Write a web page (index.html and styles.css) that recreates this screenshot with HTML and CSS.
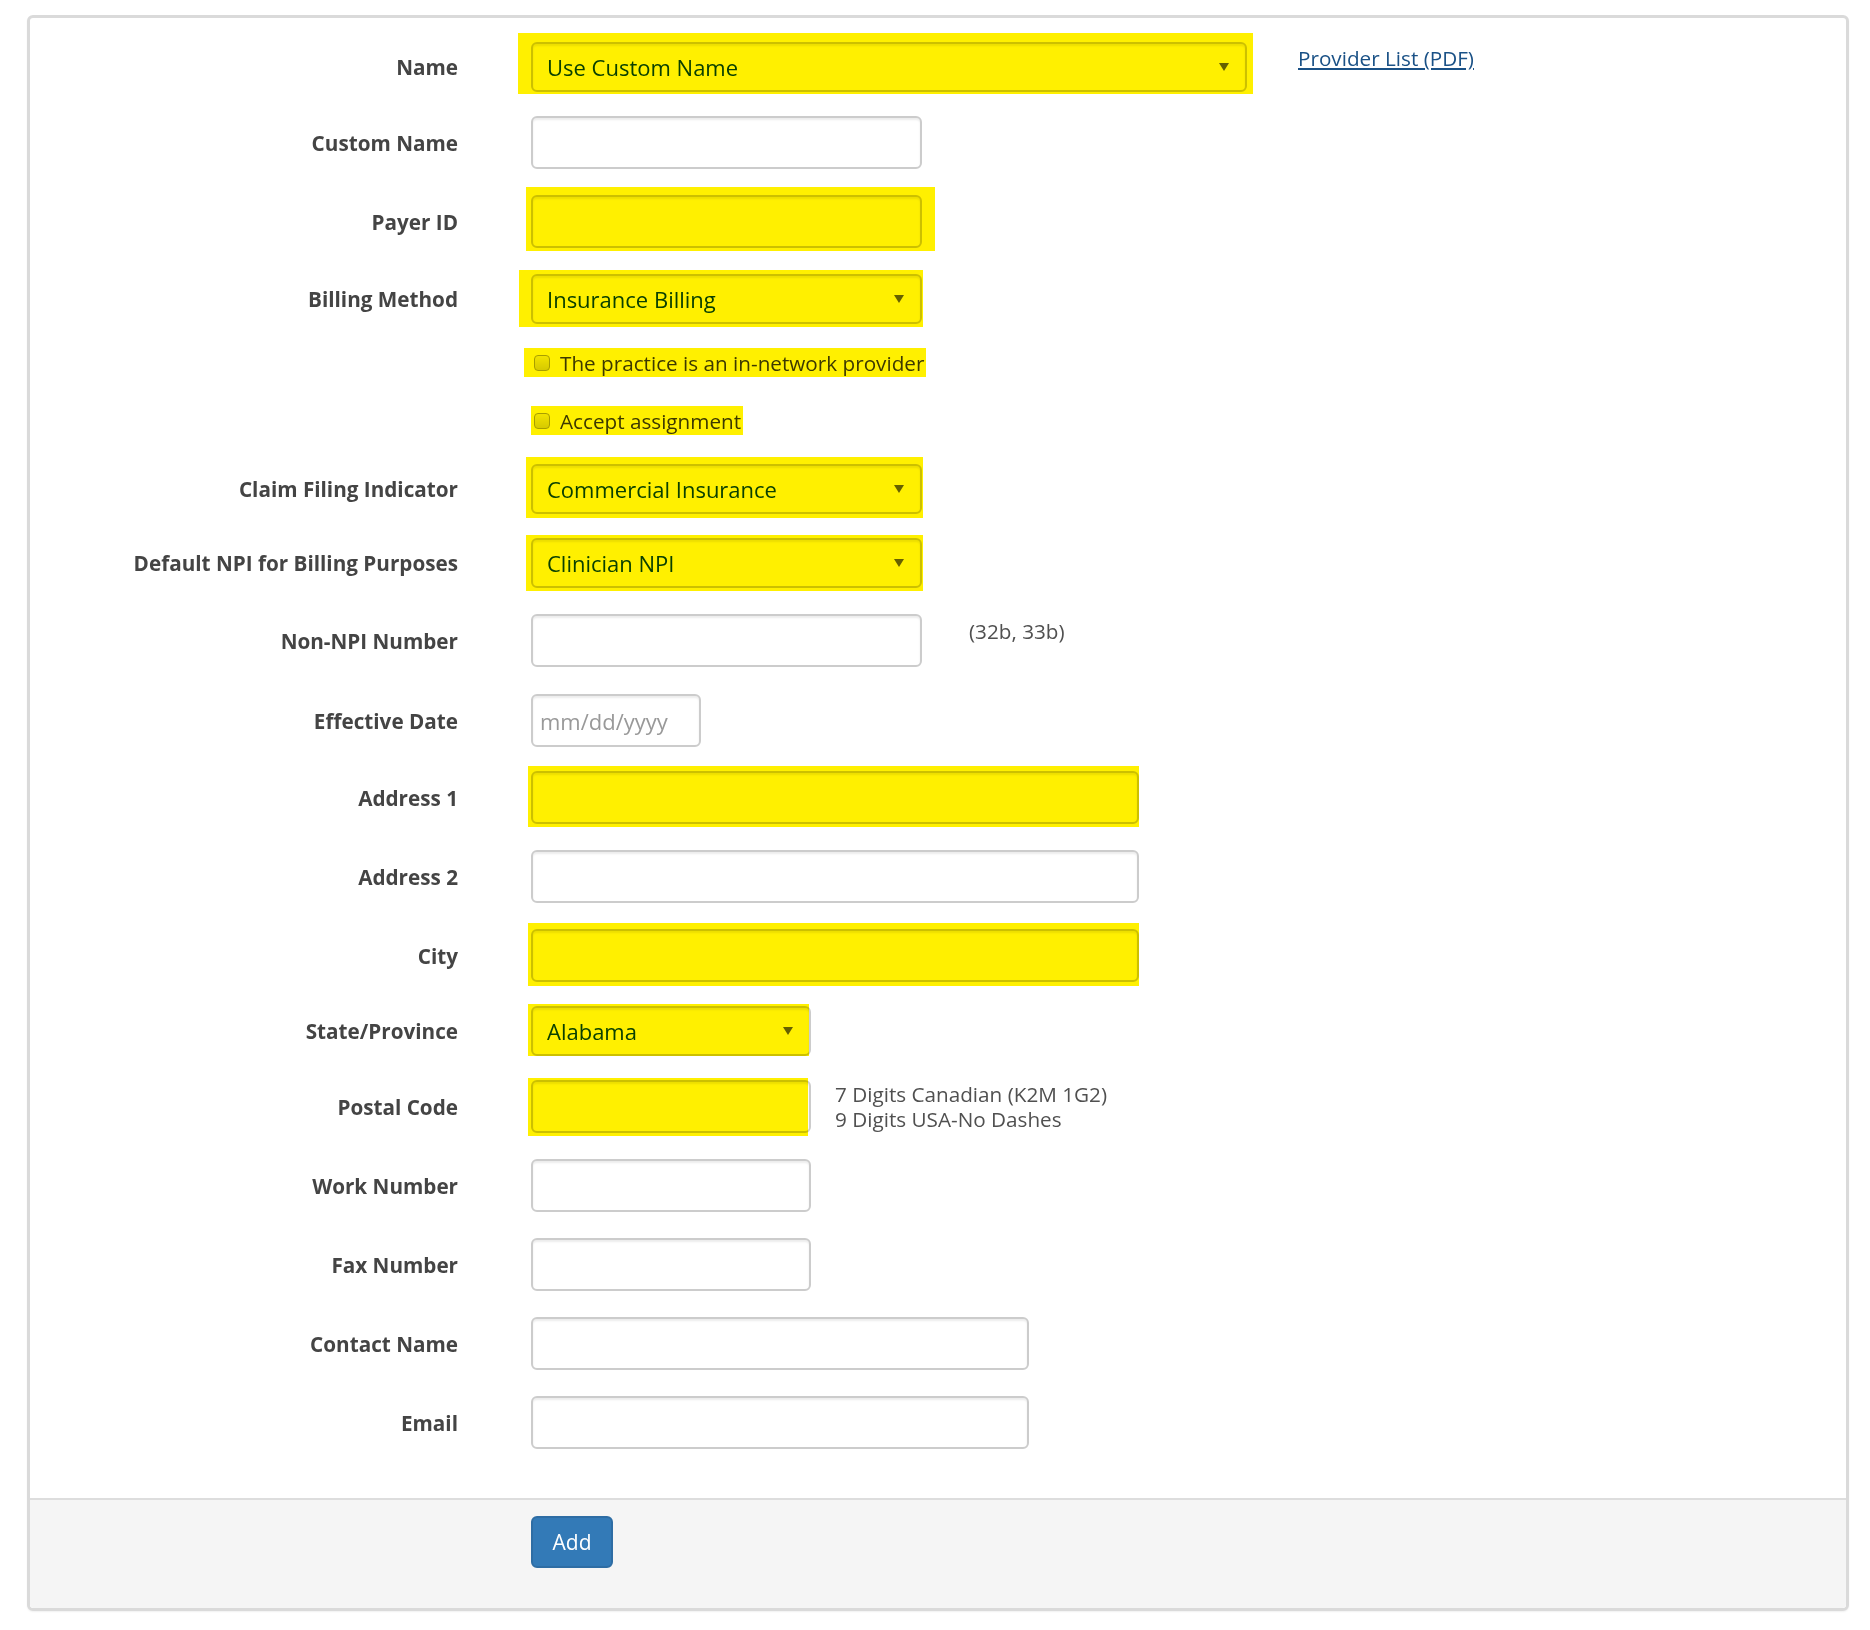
FILE: index.html
```html
<!DOCTYPE html>
<html lang="en">
<head>
    <meta charset="UTF-8">
    <meta name="viewport" content="width=device-width, initial-scale=1.0">
    <title>Add Insurance Payer</title>
    <link rel="stylesheet" href="styles.css">
</head>
<body>
    <div class="panel">
        <form class="panel-body">
            <div class="row row-select">
                <label class="label">Name</label>
                <div class="field">
                    <span class="hl hl-name"><select class="ctl sel w-xl"><option>Use Custom Name</option></select></span>
                    <a class="side-link" href="#">Provider List (PDF)</a>
                </div>
            </div>

            <div class="row">
                <label class="label">Custom Name</label>
                <div class="field"><input class="ctl w-md" type="text"></div>
            </div>

            <div class="row">
                <label class="label">Payer ID</label>
                <div class="field"><span class="hl hl-payer"><input class="ctl w-md" type="text"></span></div>
            </div>

            <div class="row row-select">
                <label class="label">Billing Method</label>
                <div class="field"><span class="hl hl-billing"><select class="ctl sel w-md"><option>Insurance Billing</option></select></span></div>
            </div>

            <div class="row row-check">
                <span></span>
                <div class="field">
                    <label class="check hl hl-cb1"><input class="cb" type="checkbox">The practice is an in-network provider</label>
                </div>
            </div>

            <div class="row row-check">
                <span></span>
                <div class="field">
                    <label class="check hl hl-cb2"><input class="cb" type="checkbox">Accept assignment</label>
                </div>
            </div>

            <div class="row row-select">
                <label class="label">Claim Filing Indicator</label>
                <div class="field"><span class="hl hl-claim"><select class="ctl sel w-md"><option>Commercial Insurance</option></select></span></div>
            </div>

            <div class="row row-select row-npi">
                <label class="label">Default NPI for Billing Purposes</label>
                <div class="field"><span class="hl hl-npi"><select class="ctl sel w-md"><option>Clinician NPI</option></select></span></div>
            </div>

            <div class="row row-nonnpi">
                <label class="label">Non-NPI Number</label>
                <div class="field">
                    <input class="ctl w-md" type="text">
                    <span class="note note-npi">(32b, 33b)</span>
                </div>
            </div>

            <div class="row row-date">
                <label class="label">Effective Date</label>
                <div class="field"><input class="ctl ctl-date w-xs" type="text" placeholder="mm/dd/yyyy"></div>
            </div>

            <div class="row">
                <label class="label">Address 1</label>
                <div class="field"><span class="hl hl-addr"><input class="ctl w-lg" type="text"></span></div>
            </div>

            <div class="row">
                <label class="label">Address 2</label>
                <div class="field"><input class="ctl w-lg" type="text"></div>
            </div>

            <div class="row row-city">
                <label class="label">City</label>
                <div class="field"><span class="hl hl-city"><input class="ctl w-lg" type="text"></span></div>
            </div>

            <div class="row row-select">
                <label class="label">State/Province</label>
                <div class="field"><span class="hl hl-state"><select class="ctl sel w-sm"><option>Alabama</option></select></span></div>
            </div>

            <div class="row">
                <label class="label">Postal Code</label>
                <div class="field">
                    <span class="hl hl-postal"><input class="ctl w-sm" type="text"></span>
                    <span class="note note-postal">7 Digits Canadian (K2M 1G2)<br>9 Digits USA-No Dashes</span>
                </div>
            </div>

            <div class="row">
                <label class="label">Work Number</label>
                <div class="field"><input class="ctl w-sm" type="text"></div>
            </div>

            <div class="row">
                <label class="label">Fax Number</label>
                <div class="field"><input class="ctl w-sm" type="text"></div>
            </div>

            <div class="row">
                <label class="label">Contact Name</label>
                <div class="field"><input class="ctl w-ml" type="text"></div>
            </div>

            <div class="row">
                <label class="label">Email</label>
                <div class="field"><input class="ctl w-ml" type="text"></div>
            </div>
        </form>

        <div class="panel-footer">
            <button class="btn-add" type="button">Add</button>
        </div>
    </div>
</body>
</html>
```

FILE: styles.css
```css
* {
    margin: 0;
    padding: 0;
    box-sizing: border-box;
}

body {
    background: #fff;
    font-family: "Open Sans", "Liberation Sans", Arial, sans-serif;
    color: #555;
}

/* panel */
.panel {
    margin: 15px 21px 20px 27px;
    border: 3px solid #dadada;
    border-radius: 6px;
    background: #fff;
    box-shadow: 0 1px 2px rgba(0,0,0,0.06);
}
.panel-body {
    padding: 24px 0 23px;
}
.panel-footer {
    border-top: 2px solid #ddd;
    background: #f5f5f5;
    padding: 16px 0 40px 501px;
    border-radius: 0 0 4px 4px;
}

/* rows */
.row {
    display: grid;
    grid-template-columns: 428px 1fr;
    column-gap: 73px;
    align-items: center;
    margin-bottom: 26px;
}
.row-select {
    margin-bottom: 24px;
}
.row-check {
    margin-bottom: 29px;
}
.row-npi {
    margin-bottom: 26px;
}
.row-nonnpi {
    margin-bottom: 27px;
}
.row-date,
.row-city {
    margin-bottom: 24px;
}
.label {
    text-align: right;
    font-weight: 700;
    font-size: 20.7px;
    color: #444;
}
.field {
    display: flex;
    align-items: flex-start;
}

/* controls */
.ctl {
    display: block;
    height: 53px;
    border: 2px solid #ccc;
    border-radius: 6px;
    background: #fff;
    box-shadow: inset 0 2px 2px rgba(0,0,0,0.075);
    font-family: inherit;
    font-size: 22px;
    color: #555;
    padding: 0 14px;
    outline: none;
}
.ctl-date {
    padding-left: 7px;
}
.ctl-date::placeholder {
    color: #999;
}
.sel {
    height: 50px;
    -webkit-appearance: none;
    appearance: none;
    color: #0a440c;
    background-image: url("data:image/svg+xml;charset=UTF-8,%3csvg xmlns='http://www.w3.org/2000/svg' viewBox='0 0 10 8'%3e%3cpolygon points='0,0 10,0 5,8' fill='%23666'/%3e%3c/svg%3e");
    background-repeat: no-repeat;
    background-position: right 16px center;
    background-size: 10px 8px;
}
.w-xl { width: 716px; }
.w-lg { width: 608px; }
.w-ml { width: 498px; }
.w-md { width: 391px; }
.w-sm { width: 280px; }
.w-xs { width: 170px; }

/* checkboxes */
.check {
    display: flex;
    align-items: center;
    height: 29px;
    padding-left: 3px;
    font-size: 20.7px;
    color: #3c3c3c;
}
.cb {
    -webkit-appearance: none;
    appearance: none;
    width: 16px;
    height: 16px;
    margin: 0 10px 0 0;
    border: 1px solid #a8a8a8;
    border-radius: 4px;
    background: linear-gradient(#f2f2f2, #d6d6d6);
}

/* side texts */
.side-link {
    margin: 2px 0 0 51px;
    font-size: 20.7px;
    line-height: 28px;
    color: #1a5186;
    text-decoration: underline;
}
.note {
    font-size: 20.7px;
    color: #505050;
}
.note-npi {
    margin: 3px 0 0 47px;
    line-height: 28px;
}
.note-postal {
    margin: 2px 0 0 24px;
    line-height: 25px;
}

/* yellow marker drawn over required fields */
.hl {
    position: relative;
    display: flex;
}
.hl::after {
    content: "";
    position: absolute;
    background: #fff000;
    mix-blend-mode: multiply;
    pointer-events: none;
}
.hl-name::after { inset: -9px -6px -2px -13px; }
.hl-payer::after { inset: -8px -13px -3px -5px; }
.hl-billing::after { inset: -4px -1px -3px -12px; }
.hl-cb1::after { inset: 0 -2px 0 -7px; }
.hl-cb2::after { inset: 0 -2px 0 0; }
.hl-claim::after { inset: -7px -1px -4px -5px; }
.hl-npi::after { inset: -3px -1px -3px -5px; }
.hl-addr::after { inset: -5px 0 -3px -3px; }
.hl-city::after { inset: -6px 0 -4px -3px; }
.hl-state::after { inset: -2px 2px 0 -3px; }
.hl-postal::after { inset: -2px 3px -3px -3px; }

/* footer button */
.btn-add {
    width: 82px;
    height: 52px;
    border: 2px solid #2e6da4;
    border-radius: 6px;
    background: #337ab7;
    color: #fff;
    font-family: inherit;
    font-size: 21px;
    cursor: pointer;
}
```
